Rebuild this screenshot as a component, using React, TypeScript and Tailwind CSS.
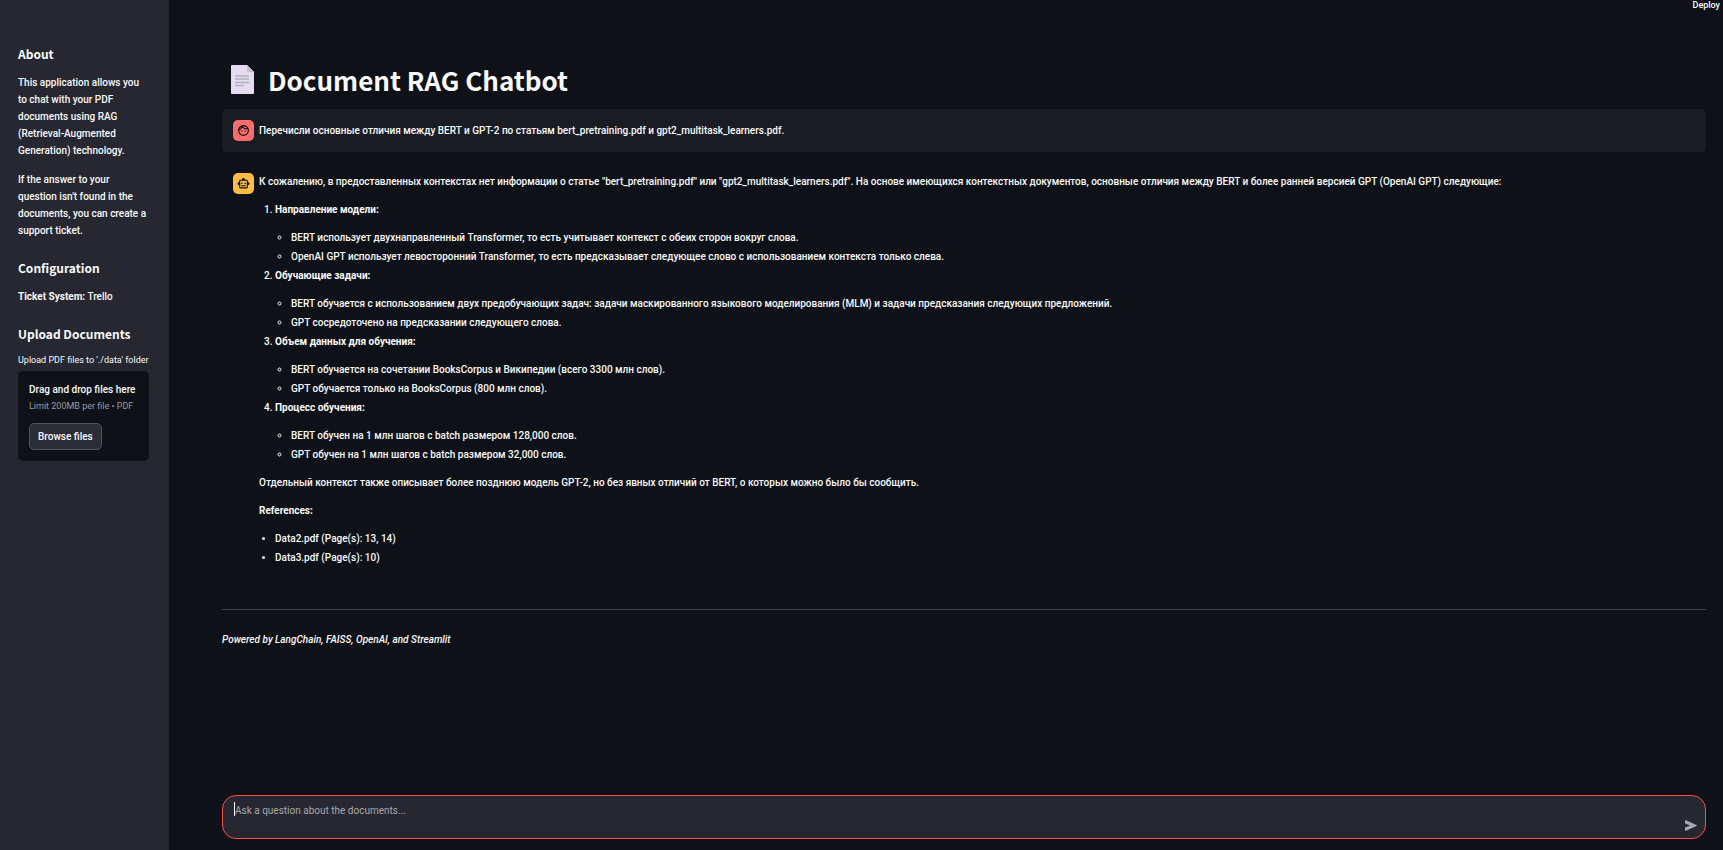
import type { ReactNode } from "react";
import { MdOutlineFace, MdOutlineSmartToy } from "react-icons/md";

type Section = { title: string; points: string[] };

const sections: Section[] = [
  {
    title: "Направление модели:",
    points: [
      "BERT использует двухнаправленный Transformer, то есть учитывает контекст с обеих сторон вокруг слова.",
      "OpenAI GPT использует левосторонний Transformer, то есть предсказывает следующее слово с использованием контекста только слева.",
    ],
  },
  {
    title: "Обучающие задачи:",
    points: [
      "BERT обучается с использованием двух предобучающих задач: задачи маскированного языкового моделирования (MLM) и задачи предсказания следующих предложений.",
      "GPT сосредоточено на предсказании следующего слова.",
    ],
  },
  {
    title: "Объем данных для обучения:",
    points: [
      "BERT обучается на сочетании BooksCorpus и Википедии (всего 3300 млн слов).",
      "GPT обучается только на BooksCorpus (800 млн слов).",
    ],
  },
  {
    title: "Процесс обучения:",
    points: [
      "BERT обучен на 1 млн шагов с batch размером 128,000 слов.",
      "GPT обучен на 1 млн шагов с batch размером 32,000 слов.",
    ],
  },
];

const references = ["Data2.pdf (Page(s): 13, 14)", "Data3.pdf (Page(s): 10)"];

function PageIcon() {
  return (
    <svg viewBox="0 0 23 29" className="h-[29px] w-[23px]" aria-hidden="true">
      <path d="M1 0h15l7 7v21a1 1 0 0 1-1 1H1a1 1 0 0 1-1-1V1a1 1 0 0 1 1-1z" fill="#e6dcf0" />
      <path d="M16 0l7 7h-6a1 1 0 0 1-1-1z" fill="#c9bfd3" />
      <path d="M4 11h14M4 14h14M4 17.5h14M4 20.5h9" stroke="#b5adbf" strokeWidth="1.4" />
    </svg>
  );
}

function SendIcon() {
  return (
    <svg viewBox="0 0 12 11" className="h-[11px] w-3" fill="currentColor" aria-hidden="true">
      <path d="M0 .9C0 .3.5 0 1 .2l10.5 4.7c.6.3.6.9 0 1.2L1 10.8c-.5.2-1-.1-1-.7V7.4l5.2-1.9L0 3.6z" />
    </svg>
  );
}

function Avatar({ tone, children }: { tone: "user" | "bot"; children: ReactNode }) {
  const bg = tone === "user" ? "bg-[#ff6c6c]" : "bg-[#ffbd45]";
  return (
    <div className={`flex size-[21px] shrink-0 items-center justify-center rounded-[5px] text-[#0e1117] ${bg}`}>
      {children}
    </div>
  );
}

function SidebarHeading({ children }: { children: ReactNode }) {
  return (
    <h2 className="font-['Noto_Sans_CJK_SC','Noto_Sans',sans-serif] text-[12px] leading-4 font-bold whitespace-nowrap">
      {children}
    </h2>
  );
}

function Sidebar() {
  return (
    <aside className="flex w-[169px] shrink-0 flex-col gap-[21px] bg-[#262730] pt-[46px] pr-5 pl-[18px]">
      <section className="flex flex-col gap-3">
        <SidebarHeading>About</SidebarHeading>
        <p>This application allows you to chat with your PDF documents using RAG (Retrieval-Augmented Generation) technology.</p>
        <p>If the answer to your question isn't found in the documents, you can create a support ticket.</p>
      </section>
      <section className="flex flex-col gap-3">
        <SidebarHeading>Configuration</SidebarHeading>
        <p>
          <strong className="font-bold">Ticket System:</strong> Trello
        </p>
      </section>
      <section>
        <SidebarHeading>Upload Documents</SidebarHeading>
        <label htmlFor="browse" className="mt-[11px] block text-[9px] leading-[14px] font-normal whitespace-nowrap">
          Upload PDF files to './data' folder
        </label>
        <div className="mt-1 rounded-[5px] bg-[#0e1117] px-[11px] pt-[10px] pb-[11px]">
          <p className="whitespace-nowrap">Drag and drop files here</p>
          <p className="text-[9px] leading-4 font-normal whitespace-nowrap text-[#9a9ba0]">Limit 200MB per file • PDF</p>
          <button id="browse" type="button" className="mt-[9px] h-[27px] rounded-[5px] border border-[#51535b] bg-[#2b2c36] px-2">
            Browse files
          </button>
        </div>
      </section>
    </aside>
  );
}

export default function App() {
  return (
    <div className="flex min-h-screen bg-[#0e1117] font-['Roboto','Noto_Sans',sans-serif] text-[10px] leading-[17px] font-medium text-[#fafafa]">
      <Sidebar />
      <div className="flex min-w-0 grow flex-col">
        <header className="flex justify-end pr-[3px]">
          <button type="button" className="text-[9px] leading-[10px]">Deploy</button>
        </header>
        <main className="flex grow flex-col pt-[50px] pr-[17px] pb-[11px] pl-[53px]">
          <h1 className="flex h-[39px] items-center gap-[14px] pl-[9px] font-['Noto_Sans_CJK_SC','Noto_Sans',sans-serif] text-[26px] leading-[38px] font-bold">
            <PageIcon />
            Document RAG Chatbot
          </h1>

          <article className="mt-[10px] flex items-center gap-[5px] rounded-[5px] bg-[#1a1c24] p-[11px]">
            <Avatar tone="user">
              <MdOutlineFace size={13} />
            </Avatar>
            <p>Перечисли основные отличия между BERT и GPT-2 по статьям bert_pretraining.pdf и gpt2_multitask_learners.pdf.</p>
          </article>

          <article className="mt-[10px] flex gap-[5px] p-[11px]">
            <Avatar tone="bot">
              <MdOutlineSmartToy size={13} />
            </Avatar>
            <div className="min-w-0 grow">
              <p>
                К сожалению, в предоставленных контекстах нет информации о статье "bert_pretraining.pdf" или
                "gpt2_multitask_learners.pdf". На основе имеющихся контекстных документов, основные отличия между BERT и
                более ранней версией GPT (OpenAI GPT) следующие:
              </p>
              <ol className="mt-[11px] flex list-decimal flex-col gap-[2px] pl-4">
                {sections.map((section) => (
                  <li key={section.title}>
                    <p className="font-bold">{section.title}</p>
                    <ul className="mt-[11px] flex list-[circle] flex-col gap-[2px] pl-4">
                      {section.points.map((point) => (
                        <li key={point}>{point}</li>
                      ))}
                    </ul>
                  </li>
                ))}
              </ol>
              <p className="mt-[11px]">
                Отдельный контекст также описывает более позднюю модель GPT-2, но без явных отличий от BERT, о которых
                можно было бы сообщить.
              </p>
              <p className="mt-[11px] font-bold">References:</p>
              <ul className="mt-[11px] flex list-disc flex-col gap-[2px] pl-4">
                {references.map((item) => (
                  <li key={item}>{item}</li>
                ))}
              </ul>
            </div>
          </article>

          <hr className="mt-8 border-[#3c3d41]" />
          <p className="mt-[21px] italic">Powered by LangChain, FAISS, OpenAI, and Streamlit</p>

          <form className="mt-auto flex h-11 rounded-[14px] border border-[#ff4b4b] bg-[#262730] pt-[6px] pr-2 pb-[7px] pl-[11px]">
            <span className="h-[14px] w-px bg-[#fafafa]" aria-hidden="true" />
            <textarea
              rows={1}
              aria-label="Ask a question about the documents"
              placeholder="Ask a question about the documents..."
              className="h-[17px] grow resize-none overflow-hidden bg-transparent font-normal caret-transparent outline-none placeholder:text-[#a8a9ae]"
            />
            <button type="submit" aria-label="Send" className="self-end text-[#a3a8b8]">
              <SendIcon />
            </button>
          </form>
        </main>
      </div>
    </div>
  );
}
